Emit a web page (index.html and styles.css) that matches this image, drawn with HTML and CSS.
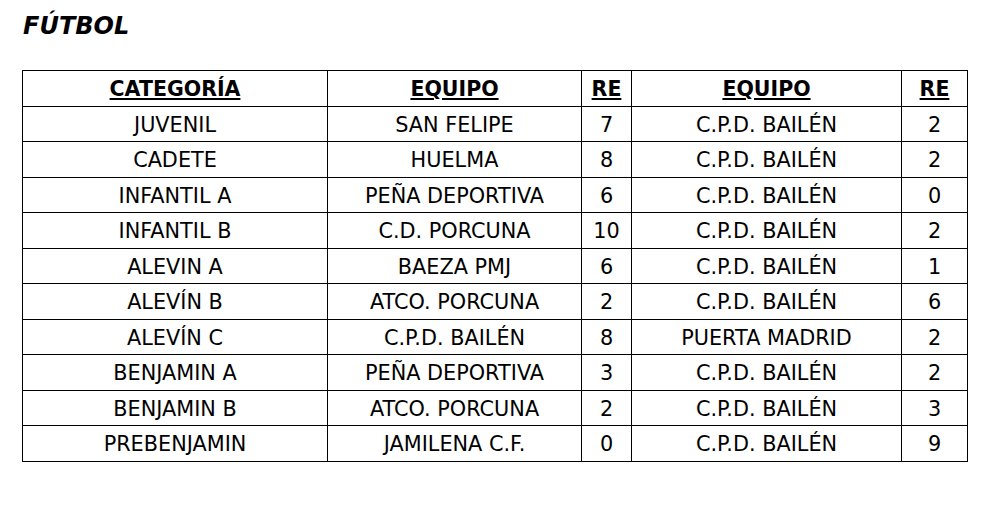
FILE: index.html
```html
<!DOCTYPE html>
<html lang="es">
<head>
<meta charset="utf-8">
<title>Fútbol</title>
<link rel="stylesheet" href="styles.css">
</head>
<body>
<h1 class="title">FÚTBOL</h1>
<table class="results">
  <colgroup>
    <col class="c-cat">
    <col class="c-team">
    <col class="c-re">
    <col class="c-team2">
    <col class="c-re2">
  </colgroup>
  <thead>
    <tr><th>CATEGORÍA</th><th>EQUIPO</th><th>RE</th><th>EQUIPO</th><th>RE</th></tr>
  </thead>
  <tbody>
    <tr><td>JUVENIL</td><td>SAN FELIPE</td><td>7</td><td>C.P.D. BAILÉN</td><td>2</td></tr>
    <tr><td>CADETE</td><td>HUELMA</td><td>8</td><td>C.P.D. BAILÉN</td><td>2</td></tr>
    <tr><td>INFANTIL A</td><td>PEÑA DEPORTIVA</td><td>6</td><td>C.P.D. BAILÉN</td><td>0</td></tr>
    <tr><td>INFANTIL B</td><td>C.D. PORCUNA</td><td>10</td><td>C.P.D. BAILÉN</td><td>2</td></tr>
    <tr><td>ALEVIN A</td><td>BAEZA PMJ</td><td>6</td><td>C.P.D. BAILÉN</td><td>1</td></tr>
    <tr><td>ALEVÍN B</td><td>ATCO. PORCUNA</td><td>2</td><td>C.P.D. BAILÉN</td><td>6</td></tr>
    <tr><td>ALEVÍN C</td><td>C.P.D. BAILÉN</td><td>8</td><td>PUERTA MADRID</td><td>2</td></tr>
    <tr><td>BENJAMIN A</td><td>PEÑA DEPORTIVA</td><td>3</td><td>C.P.D. BAILÉN</td><td>2</td></tr>
    <tr><td>BENJAMIN B</td><td>ATCO. PORCUNA</td><td>2</td><td>C.P.D. BAILÉN</td><td>3</td></tr>
    <tr><td>PREBENJAMIN</td><td>JAMILENA C.F.</td><td>0</td><td>C.P.D. BAILÉN</td><td>9</td></tr>
  </tbody>
</table>
</body>
</html>
```
FILE: styles.css
```css
html, body {
  margin: 0;
  padding: 0;
  background: #ffffff;
}
body {
  padding-left: 22px;
  font-family: "DejaVu Sans", Verdana, sans-serif;
  color: #000000;
}
.title {
  margin: 12px 0 0 1px;
  font-size: 24px;
  line-height: 28px;
  font-weight: bold;
  font-style: italic;
  height: 28px;
}
.results {
  margin-top: 30px;
  border-collapse: collapse;
  table-layout: fixed;
  width: 946px;
  font-size: 20.8px;
}
.c-cat { width: 305px; }
.c-team { width: 254px; }
.c-re { width: 50px; }
.c-team2 { width: 270px; }
.c-re2 { width: 66px; }
.results th,
.results td {
  border: 1px solid #000000;
  padding: 2px 0 0 0;
  text-align: center;
  vertical-align: middle;
  height: 32.5px;
  line-height: 24px;
  white-space: nowrap;
}
.results th {
  font-size: 20.5px;
  font-weight: bold;
  text-decoration: underline;
  text-underline-offset: 2px;
}
```
